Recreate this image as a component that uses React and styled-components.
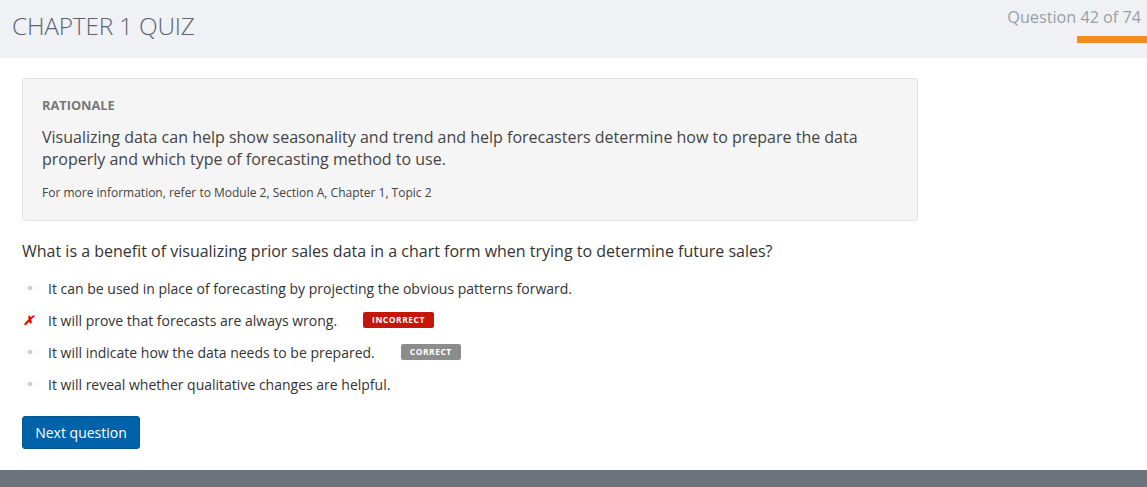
import React from 'react';
import styled, { createGlobalStyle } from 'styled-components';

const Global = createGlobalStyle`
  * { box-sizing: border-box; }
  body {
    margin: 0;
    font-family: "Open Sans", "Liberation Sans", sans-serif;
    background: #fff;
    color: #333;
  }
`;

const Page = styled.div`
  width: 1147px;
  height: 487px;
  display: flex;
  flex-direction: column;
  overflow: hidden;
`;

const Header = styled.div`
  height: 58px;
  background: #eff1f5;
  display: flex;
  justify-content: space-between;
  flex-shrink: 0;
`;

const Title = styled.h1`
  margin: 0;
  padding: 9px 0 0 12px;
  font-size: 24.4px;
  font-weight: 300;
  color: #5b6572;
  letter-spacing: -0.2px;
`;

const Progress = styled.div`
  display: flex;
  flex-direction: column;
  align-items: flex-end;
  padding-top: 6px;
`;

const Count = styled.div`
  font-size: 16.2px;
  color: #98a0a8;
  padding-right: 6px;
`;

const Bar = styled.div`
  margin-top: 8px;
  width: 70px;
  height: 7px;
  background: #f28c1d;
`;

const Main = styled.div`
  flex: 1;
  padding: 20px 22px 0 22px;
`;

const Rationale = styled.div`
  width: 896px;
  background: #f5f5f5;
  border: 1px solid #e3e3e3;
  border-radius: 3px;
  padding: 17px 19px 19px 19px;
`;

const Label = styled.div`
  font-size: 12.8px;
  line-height: 18px;
  font-weight: 700;
  color: #777;
`;

const Explain = styled.p`
  margin: 12px 0 0;
  font-size: 16px;
  line-height: 22px;
  color: #444;
`;

const More = styled.p`
  margin: 14px 0 0;
  font-size: 12px;
  line-height: 17px;
  color: #444;
`;

const Question = styled.p`
  margin: 19px 0 10px;
  font-size: 16px;
  color: #333;
`;

const Options = styled.ul`
  list-style: none;
  margin: 0;
  padding: 0;
`;

const Option = styled.li`
  height: 32px;
  display: flex;
  align-items: center;
  font-size: 14px;
  color: #333;
`;

const Mark = styled.span`
  width: 26px;
  flex-shrink: 0;
  display: flex;
  align-items: center;
  padding-left: ${(p) => (p.$wrong ? '1px' : '6px')};
  color: #e00;
  font-size: 13px;
  font-style: italic;
  font-weight: 700;
`;

const Dot = styled.span`
  width: 4px;
  height: 4px;
  background: #c8c8c8;
  transform: rotate(45deg);
`;

const Badge = styled.span`
  margin-left: ${(p) => p.$gap}px;
  background: ${(p) => p.$bg};
  color: #fff;
  font-size: 8.5px;
  font-weight: 700;
  letter-spacing: 0.5px;
  padding: 2px 9px;
  border-radius: 2px;
  line-height: 12px;
`;

const Button = styled.button`
  margin-top: 16px;
  background: #0062a8;
  color: #fff;
  border: 1px solid #00568f;
  border-radius: 3px;
  font-family: inherit;
  font-size: 14px;
  padding: 0 12px;
  height: 33px;
  width: 118px;
`;

const Footer = styled.div`
  height: 17px;
  background: #6b747c;
  flex-shrink: 0;
`;

const answers = [
  { text: 'It can be used in place of forecasting by projecting the obvious patterns forward.' },
  { text: 'It will prove that forecasts are always wrong.', wrong: true, badge: 'INCORRECT', bg: '#c4160b', gap: 26 },
  { text: 'It will indicate how the data needs to be prepared.', badge: 'CORRECT', bg: '#8c8c8c', gap: 26 },
  { text: 'It will reveal whether qualitative changes are helpful.' },
];

export default function App() {
  return (
    <Page>
      <Global />
      <Header>
        <Title>CHAPTER 1 QUIZ</Title>
        <Progress>
          <Count>Question 42 of 74</Count>
          <Bar />
        </Progress>
      </Header>
      <Main>
        <Rationale>
          <Label>RATIONALE</Label>
          <Explain>
            Visualizing data can help show seasonality and trend and help forecasters determine how to prepare the data
            properly and which type of forecasting method to use.
          </Explain>
          <More>For more information, refer to Module 2, Section A, Chapter 1, Topic 2</More>
        </Rationale>
        <Question>What is a benefit of visualizing prior sales data in a chart form when trying to determine future sales?</Question>
        <Options>
          {answers.map((a) => (
            <Option key={a.text}>
              <Mark $wrong={a.wrong}>{a.wrong ? '✗' : <Dot />}</Mark>
              {a.text}
              {a.badge && (
                <Badge $bg={a.bg} $gap={a.gap}>
                  {a.badge}
                </Badge>
              )}
            </Option>
          ))}
        </Options>
        <Button>Next question</Button>
      </Main>
      <Footer />
    </Page>
  );
}
